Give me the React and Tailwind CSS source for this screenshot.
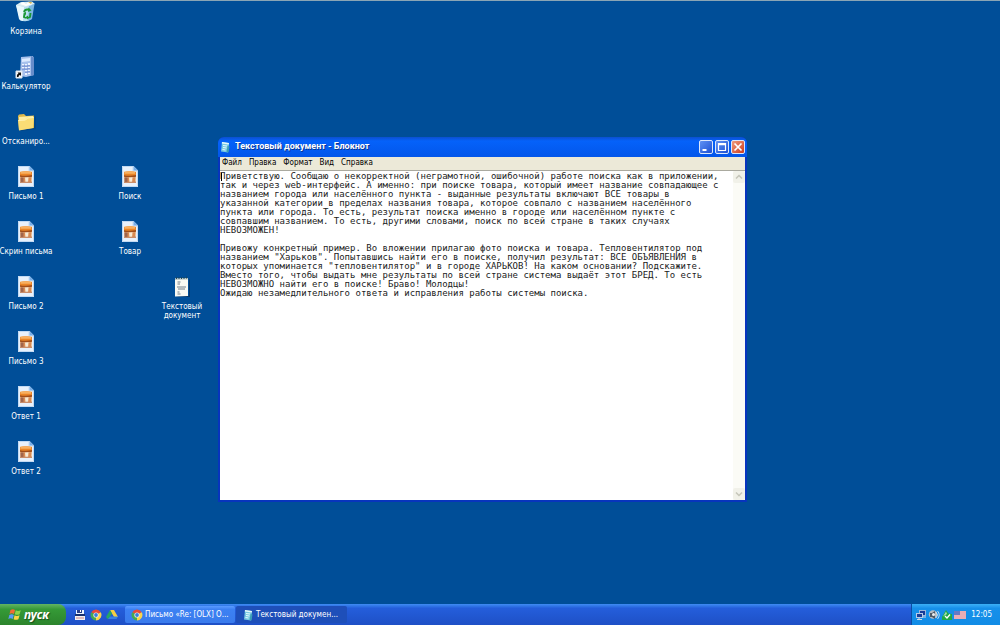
import React from 'react';

const DOCUMENT_TEXT = `Приветствую. Сообщаю о некорректной (неграмотной, ошибочной) работе поиска как в приложении,
так и через web-интерфейс. А именно: при поиске товара, который имеет название совпадающее с
названием города или населённого пункта - выданные результаты включают ВСЕ товары в
указанной категории в пределах названия товара, которое совпало с названием населённого
пункта или города. То есть, результат поиска именно в городе или населённом пункте с
совпавшим названием. То есть, другими словами, поиск по всей стране в таких случаях
НЕВОЗМОЖЕН!

Привожу конкретный пример. Во вложении прилагаю фото поиска и товара. Тепловентилятор под
названием "Харьков". Попытавшись найти его в поиске, получил результат: ВСЕ ОБЪЯВЛЕНИЯ в
которых упоминается "тепловентилятор" и в городе ХАРЬКОВ! На каком основании? Подскажите.
Вместо того, чтобы выдать мне результаты по всей стране система выдаёт этот БРЕД. То есть
НЕВОЗМОЖНО найти его в поиске! Браво! Молодцы!
Ожидаю незамедлительного ответа и исправления работы системы поиска.`;

function BinIcon() {
  return (
    <svg viewBox="0 0 22 22" className="size-[22px]" aria-hidden="true">
      <path d="M1 4 18.500 4 16.500 18Q11 22 5 19Z" fill="#b9def0" />
      <path d="M1 4 9 6 8 20Q5 20 4 18Z" fill="#e9f8fc" />
      <path d="M14 5 19.500 3 17 18 13 20Z" fill="#79b5df" />
      <path d="M1 4 6 1 17 .5 20 3 10 6Z" fill="#d9edf2" />
      <path d="m5 3 3-2 3 2 3-2.500 3 2.500-6 2Z" fill="#fff" />
      <path d="m13 1 4 0-1 2Z" fill="#d4b857" />
      <g fill="none" stroke="#1a9733" strokeWidth="1.900">
        <path d="M9 11q1-3 4-2.500l2 .5M15.500 12l-.5 4-2 1M11 17l-2-1 .5-3" />
      </g>
      <path d="m13.500 6.500 3 3-3.500 1.500ZM8 12l3-1 0 3ZM13 14.500l0 4-3-2Z" fill="#1a9733" />
    </svg>
  );
}

function CalculatorIcon() {
  return (
    <svg viewBox="0 0 22 24" className="h-6 w-[22px]" aria-hidden="true">
      <path d="m6 2 12-1 1 19-8 2-6-1Z" fill="#a7c1ec" />
      <path d="m16 1 3 1v18l-3 1Z" fill="#668cca" />
      <path d="m7 4 8-1v3l-8 1Z" fill="#dcebff" />
      <g fill="#edf4ff">
        <path d="M7 9h2v2H7zM10 9h2v2h-2zM13 8h2v2h-2zM7 12h2v2H7zM10 12h2v2h-2zM13 11h2v2h-2zM10 15h2v2h-2zM13 14h2v2h-2zM10 18h2v2h-2zM13 17h2v2h-2z" />
      </g>
      <path d="M7 11h8M7 14h8M10 17h5" stroke="#4867bc" strokeWidth=".8" />
      <path d="M1 16h6v7H1z" fill="#fff" stroke="#dce5ee" />
      <path d="M2 22q-.5-3 1.500-3.500L2.500 17.500H6v3.500l-1-1q-1.500 0-1.500 2Z" fill="#111" />
    </svg>
  );
}

function FolderIcon() {
  return (
    <svg viewBox="0 0 22 22" className="size-[22px]" aria-hidden="true">
      <path d="M4 18 19 17 20 5 21 6v12l-15 2Z" fill="#063d73" opacity=".5" />
      <path d="M3 5 4 3.500 9 3 11 5 19 4.500V17L4 19Z" fill="#dfb94b" />
      <path d="m4 6 14-1v10L4 18Z" fill="#ffeea1" />
      <path d="M3 9 10 8.500l2-2L19 6 18 17 4 19.500Z" fill="#fadd75" />
      <path d="m3.500 9.500 7-.5 2-2 6-.5" fill="none" stroke="#fff6bd" />
    </svg>
  );
}

function PictureFileIcon() {
  return (
    <svg viewBox="0 0 18 22" className="h-[22px] w-[18px]" aria-hidden="true">
      <path d="M1 0h11.500l4.500 4.500V21H1Z" fill="#e8f1fc" />
      <path d="M1.500.5H12v4.500h4.500v15.500h-15Z" fill="none" stroke="#c2d9f2" />
      <path d="m12.500 0 4.500 4.500h-4.500Z" fill="#75aee9" />
      <path d="M3 5.500h12V17H3z" fill="#f3d3b0" />
      <path d="M3 6q6-1.500 12 0v4.500H3Z" fill="#ea8426" />
      <path d="M3.500 6q5-1.500 10.500 0v1.700H3.500Z" fill="#f8b060" />
      <path d="M3 9.300q6 1.200 12-.3v1.800q-6 1.200-12 0Z" fill="#a04d1b" />
      <path d="M3.500 11q5.500 1 11 0L14 17H4Z" fill="#d98a52" />
      <path d="m8 11.500 3.500-.3-.5 5.800H8.500z" fill="#f8ead4" />
      <path d="M3.500 11.500h3L6.500 17H3.500z" fill="#a0654c" />
      <path d="m3 16 12-.5V17H3Z" fill="#c98d6a" />
    </svg>
  );
}

function TextFileIcon() {
  return (
    <svg viewBox="0 0 18 22" className="h-[22px] w-[18px]" aria-hidden="true">
      <path d="M4 20.500 16 20V3l1 1v17H5Z" fill="#063768" />
      <path d="M2 2.500 15 2v18L2 20.500Z" fill="#fafaf3" />
      <path d="M2 2.500 15 2v1.500L2 4Z" fill="#bac8c6" />
      <path d="M3.500 1v2M6 1v2M8.500 1v2M11 1v2M13.500 .5v2" stroke="#1d4659" />
      <path d="M4.500 6h3M4.500 8h2.500M4 11h9M5 13h7M4.500 16h2M4.500 18h3" stroke="#727f8a" strokeWidth="1.200" />
    </svg>
  );
}

function NotepadIcon() {
  return (
    <svg viewBox="0 0 12 12" className="size-3 shrink-0" aria-hidden="true">
      <path d="m3 1 7 1-1 9.500-7-1Z" fill="#79c9e2" />
      <path d="m3 1 7 1-.2 1.500-7-1Z" fill="#e5f7fa" />
      <path d="m4 4.500 4 .5M4 6.500l3.500.5M3.500 8.500l3 .5" stroke="#e7fbff" />
      <path d="m8.500 5 2 .5-1 6-2-.5Z" fill="#3c9fb5" />
    </svg>
  );
}

function ChromeIcon() {
  return (
    <svg viewBox="0 0 12 12" className="size-3 shrink-0" aria-hidden="true">
      <path d="M6 6 1.300 3.300A5.400 5.400 0 0 1 10.700 3.300Z" fill="#e94a38" />
      <path d="M6 6 10.700 3.300A5.400 5.400 0 0 1 6 11.400Z" fill="#fad44a" />
      <path d="M6 6v5.400A5.400 5.400 0 0 1 1.300 3.300Z" fill="#47a852" />
      <circle cx="6" cy="6" r="2.600" fill="#f5f6ef" />
      <circle cx="6" cy="6" r="1.900" fill="#397dde" />
    </svg>
  );
}

function SaveIcon() {
  return (
    <svg viewBox="0 0 12 12" className="size-3" aria-hidden="true">
      <path d="M2 1h8v4H2z" fill="#e9f3ff" />
      <path d="M3 1h5v3H3z" fill="#283f8a" />
      <path d="M6 1h1v2H6z" fill="#fff" />
      <path d="M1 5h10v2H1z" fill="#18306f" />
      <path d="M1 7h10v4H1z" fill="#f1eff0" />
      <path d="M2 9h8" stroke="#c98284" />
    </svg>
  );
}

function DriveIcon() {
  return (
    <svg viewBox="0 0 12 12" className="size-3" aria-hidden="true">
      <path d="M4 1h4l4 7H8Z" fill="#f5ce42" />
      <path d="m4 1 2 3.500-4 6L0 8Z" fill="#25a565" />
      <path d="M4 7.500h8l-1.500 2.500H2Z" fill="#3780e3" />
    </svg>
  );
}

function WindowsLogo() {
  return (
    <svg viewBox="0 0 14 13" className="h-[13px] w-3.5" aria-hidden="true">
      <path d="M2.500 2q2.500-1.500 4.500 0L6 6Q4 4.500 1.500 6Z" fill="#f26a35" />
      <path d="M7.800 2.200q2 1.500 5 0l-1.200 4q-2.500 1.300-4.800 0Z" fill="#8ed34a" />
      <path d="M1.300 7q2.500-1.500 4.500 0l-1 4Q2.500 9.500.3 11Z" fill="#5c9bf6" />
      <path d="M6.600 7.200q2 1.500 5 0l-1.200 4q-2.500 1.300-4.800 0Z" fill="#fbd346" />
    </svg>
  );
}

function NetworkIcon() {
  return (
    <svg viewBox="0 0 12 12" className="size-3" aria-hidden="true">
      <path d="M4 1h7v6H4z" fill="#9fb5da" />
      <path d="M5 2h5v4H5z" fill="#173b98" />
      <path d="M1 4h7v5H1z" fill="#b9cbe6" />
      <path d="M2 5h5v3H2z" fill="#1a3f9a" />
      <path d="M4 9v1M2 10.500h5M8 8h3" stroke="#d1d9e7" />
    </svg>
  );
}

function SpeakerIcon() {
  return (
    <svg viewBox="0 0 12 12" className="size-3" aria-hidden="true">
      <circle cx="5" cy="5.500" r="4.200" fill="#b5bbc2" />
      <path d="M2 4h2l3-2v8L4 8H2Z" fill="#4d5968" />
      <circle cx="5.500" cy="5.500" r="1.500" fill="#eceff1" />
      <path d="M8 3q3 3 0 6M9.500 2q3.500 4 0 8" fill="none" stroke="#e5edf5" strokeWidth=".8" />
    </svg>
  );
}

function SafeIcon() {
  return (
    <svg viewBox="0 0 12 12" className="size-3" aria-hidden="true">
      <path d="M1 8 5 1l2.500 3.500 3.500.5v6H1Z" fill="#20a943" />
      <path d="m2 7.500 3-5 1 2.500Z" fill="#a3d9b2" />
      <path d="m4 7 2 2 3-3.500" fill="none" stroke="#fff" strokeWidth="1.300" />
    </svg>
  );
}

function FlagIcon() {
  return (
    <svg viewBox="0 0 12 12" className="size-3" aria-hidden="true">
      <path d="M0 2h12v8H0z" fill="#f3dfe5" />
      <path d="M0 3h12M0 5h12M0 7h12M0 9h12" stroke="#dc7179" strokeWidth=".9" />
      <path d="M0 2h6v4H0z" fill="#6479c5" />
    </svg>
  );
}

const ICONS = [
  { label: 'Корзина', Icon: BinIcon, place: 'col-start-1 row-start-1' },
  { label: 'Калькулятор', Icon: CalculatorIcon, place: 'col-start-1 row-start-2' },
  { label: 'Отсканиро...', Icon: FolderIcon, place: 'col-start-1 row-start-3' },
  { label: 'Письмо 1', Icon: PictureFileIcon, place: 'col-start-1 row-start-4' },
  { label: 'Скрин письма', Icon: PictureFileIcon, place: 'col-start-1 row-start-5' },
  { label: 'Письмо 2', Icon: PictureFileIcon, place: 'col-start-1 row-start-6' },
  { label: 'Письмо 3', Icon: PictureFileIcon, place: 'col-start-1 row-start-7' },
  { label: 'Ответ 1', Icon: PictureFileIcon, place: 'col-start-1 row-start-8' },
  { label: 'Ответ 2', Icon: PictureFileIcon, place: 'col-start-1 row-start-9' },
  { label: 'Поиск', Icon: PictureFileIcon, place: 'col-start-3 row-start-4' },
  { label: 'Товар', Icon: PictureFileIcon, place: 'col-start-3 row-start-5' },
  { label: 'Текстовый документ', Icon: TextFileIcon, place: 'col-start-4 row-start-6' },
];

function DesktopIcon({ label, Icon, place }) {
  return (
    <button type="button" className={`flex flex-col items-center gap-1 text-[8px] leading-[9px] text-white ${place}`}>
      <span className="flex h-[22px] items-center">
        <Icon />
      </span>
      <span className={label === 'Текстовый документ' ? 'w-11' : 'whitespace-nowrap'}>{label}</span>
    </button>
  );
}

function CaptionButton({ label, tone, children }) {
  return (
    <button
      type="button"
      aria-label={label}
      className={`flex size-3.5 items-center justify-center rounded-xs border border-[#dce8fc] bg-linear-to-br ${tone}`}
    >
      <svg viewBox="0 0 10 10" className="size-2.5" fill="none" stroke="white" aria-hidden="true">
        {children}
      </svg>
    </button>
  );
}

function ScrollButton({ label, d }) {
  return (
    <button type="button" aria-label={label} className="flex h-3 w-full items-center justify-center rounded-xs bg-[#f1f1e9]">
      <svg viewBox="0 0 8 8" className="size-2" fill="none" stroke="#c5c5b9" strokeWidth="1.500" aria-hidden="true">
        <path d={d} />
      </svg>
    </button>
  );
}

function Notepad() {
  return (
    <section
      aria-label="Блокнот"
      className="absolute top-[136px] left-[218px] flex h-[365px] w-[529px] flex-col rounded-t-md border-x-2 border-b-2 border-[#0734bd] bg-[#0734bd]"
    >
      <header className="-mx-0.5 flex h-5 shrink-0 items-center gap-1 rounded-t-md bg-linear-to-b from-[#0b50d0] via-[#0562fa] via-20% to-[#0356ea] pr-0.5 pl-px">
        <NotepadIcon />
        <h1 className="flex-1 font-[Roboto,sans-serif] text-[9px] font-bold text-white [text-shadow:1px_1px_0_#0b368f]">
          Текстовый документ - Блокнот
        </h1>
        <div className="flex gap-0.5">
          <CaptionButton label="Свернуть" tone="from-[#5f91f3] to-[#1e4fd4]">
            <path d="M1.500 8h4" strokeWidth="2" />
          </CaptionButton>
          <CaptionButton label="Развернуть" tone="from-[#5f91f3] to-[#1e4fd4]">
            <path d="M1.500 1.500h7v7h-7z" strokeWidth="1.200" />
            <path d="M1 2.500h8" strokeWidth="1.500" />
          </CaptionButton>
          <CaptionButton label="Закрыть" tone="from-[#ee9a7c] to-[#cd3818]">
            <path d="m1.500 1.500 7 7m0-7-7 7" strokeWidth="1.700" />
          </CaptionButton>
        </div>
      </header>
      <nav className="flex h-[13px] shrink-0 items-start gap-[7px] bg-[#ece9d8] pl-0.5 text-[8px] leading-[11px] text-black">
        {['Файл', 'Правка', 'Формат', 'Вид', 'Справка'].map((item) => (
          <button type="button" key={item}>
            {item}
          </button>
        ))}
      </nav>
      <div className="relative flex min-h-0 flex-1 border-t border-[#aaa99f] bg-white">
        <textarea
          aria-label="Текст документа"
          wrap="off"
          spellCheck={false}
          defaultValue={DOCUMENT_TEXT}
          className="block min-w-0 flex-1 resize-none overflow-hidden border-0 bg-white pt-px font-['DejaVu_Sans_Mono',monospace] text-[9px] leading-[9px] text-[#222] outline-none"
        />
        <span className="absolute top-0.5 left-px h-2 w-px bg-black" />
        <div className="flex w-3 flex-col justify-between bg-[#fbfbf6]">
          <ScrollButton label="Прокрутить вверх" d="m1 5.500 3-3 3 3" />
          <ScrollButton label="Прокрутить вниз" d="m1 2.500 3 3 3-3" />
        </div>
      </div>
    </section>
  );
}

function Taskbar() {
  return (
    <footer className="flex h-[21px] items-stretch bg-linear-to-b from-[#3f8cf3] via-[#245edb] via-20% to-[#1e50c6] text-[8px] text-white">
      <button
        type="button"
        className="flex w-[66px] items-center gap-0.5 rounded-r-lg bg-linear-to-b from-[#62b462] via-[#359a37] via-25% to-[#2c842c] pl-2 font-['Noto_Sans',sans-serif] text-[12px] font-bold italic [text-shadow:1px_1px_1px_#1b4f1b]"
      >
        <WindowsLogo />
        пуск
      </button>
      <div className="flex w-[59px] items-center gap-1 pl-2">
        <button type="button" aria-label="Сохранить">
          <SaveIcon />
        </button>
        <button type="button" aria-label="Chrome">
          <ChromeIcon />
        </button>
        <button type="button" aria-label="Диск">
          <DriveIcon />
        </button>
      </div>
      <div className="flex flex-1 gap-px py-0.5">
        <button type="button" className="flex w-[110px] items-center gap-0.5 rounded-xs bg-linear-to-b from-[#5a9bff] via-[#3c81f3] via-20% to-[#3a7bec] pl-1.5">
          <ChromeIcon />
          Письмо «Re: [OLX] О...
        </button>
        <button type="button" className="flex w-[111px] items-center gap-0.5 rounded-xs bg-[#1e4fb9] pl-1.5">
          <NotepadIcon />
          Текстовый докумен...
        </button>
      </div>
      <div className="flex w-[89px] items-center justify-end gap-px border-l border-[#0b4fa5] bg-linear-to-b from-[#3bb0f6] via-[#1690ea] via-20% to-[#118ce6] pr-2">
        <NetworkIcon />
        <SpeakerIcon />
        <SafeIcon />
        <FlagIcon />
        <time className="pl-1">12:05</time>
      </div>
    </footer>
  );
}

export default function App() {
  return (
    <div className="relative flex min-h-screen flex-col overflow-hidden border-t border-[#8aa5b5] bg-[#004e98] font-['DejaVu_Sans_Condensed','DejaVu_Sans',sans-serif]">
      <main className="flex-1">
        <div className="grid auto-rows-[55px] grid-cols-[repeat(4,52px)]">
          {ICONS.map((icon) => (
            <DesktopIcon key={icon.label} {...icon} />
          ))}
        </div>
        <Notepad />
      </main>
      <Taskbar />
    </div>
  );
}
